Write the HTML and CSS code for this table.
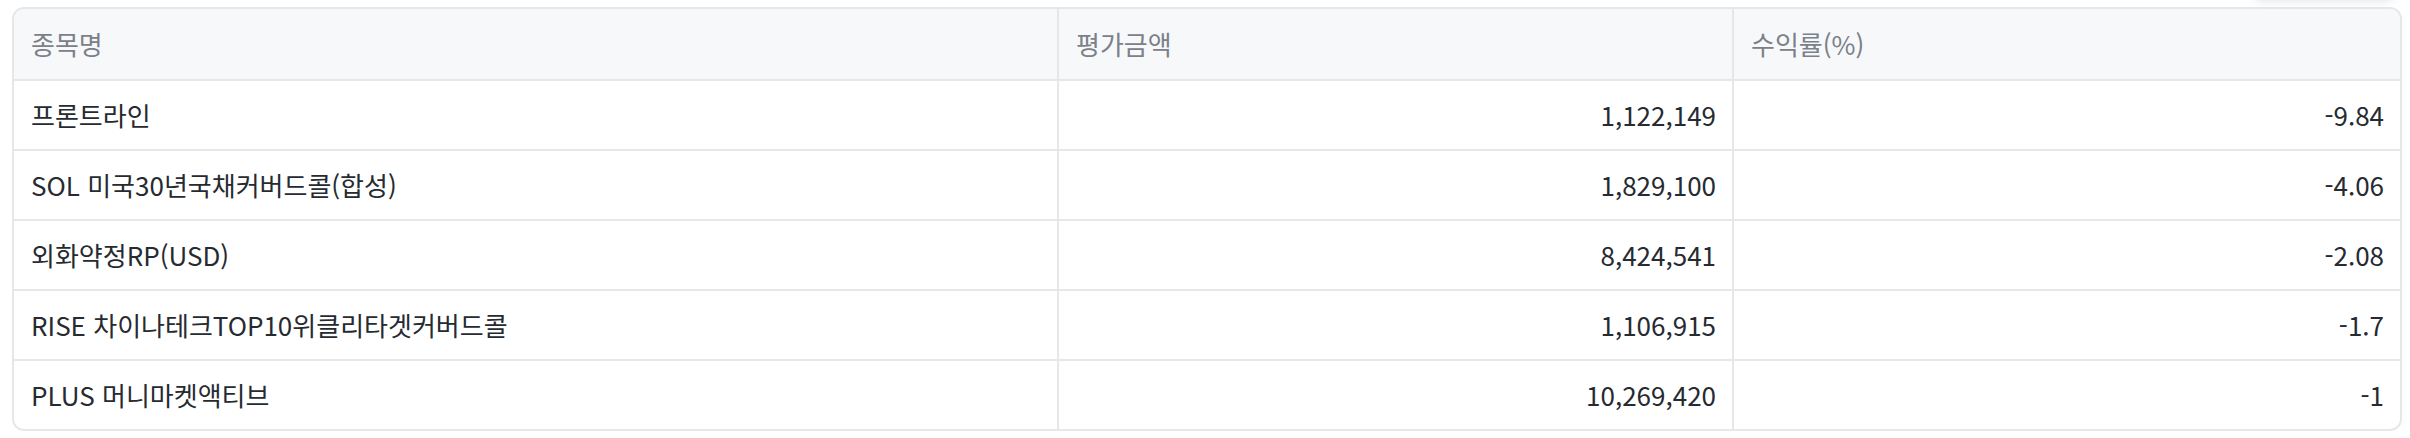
FILE: index.html
```html
<!DOCTYPE html>
<html lang="ko">
<head>
<meta charset="utf-8">
<link rel="stylesheet" href="styles.css">
</head>
<body>
<div class="page">
  <div class="top-shadow"></div>
  <div class="table-wrap">
    <table class="holdings">
      <thead>
        <tr>
          <th class="col-name">종목명</th>
          <th class="col-value">평가금액</th>
          <th class="col-rate">수익률(%)</th>
        </tr>
      </thead>
      <tbody>
        <tr><td>프론트라인</td><td class="num">1,122,149</td><td class="num">-9.84</td></tr>
        <tr><td>SOL 미국30년국채커버드콜(합성)</td><td class="num">1,829,100</td><td class="num">-4.06</td></tr>
        <tr><td>외화약정RP(USD)</td><td class="num">8,424,541</td><td class="num">-2.08</td></tr>
        <tr><td>RISE 차이나테크TOP10위클리타겟커버드콜</td><td class="num">1,106,915</td><td class="num">-1.7</td></tr>
        <tr><td>PLUS 머니마켓액티브</td><td class="num">10,269,420</td><td class="num">-1</td></tr>
      </tbody>
    </table>
  </div>
</div>
</body>
</html>
```

FILE: styles.css
```css
html, body {
  margin: 0;
  padding: 0;
  background: #ffffff;
}

body {
  font-family: "Noto Sans CJK KR", "Noto Sans", sans-serif;
  color: #2b2f36;
}

.page {
  position: relative;
  padding: 7px 8px 0 12px;
}

.top-shadow {
  position: absolute;
  top: -40px;
  right: 16px;
  width: 140px;
  height: 40px;
  border-radius: 8px;
  background: #ffffff;
  box-shadow: 0 2px 8px rgba(0, 0, 0, 0.09);
}

.table-wrap {
  border: 2px solid #e6e7e9;
  border-radius: 12px;
  overflow: hidden;
  background: #ffffff;
}

.holdings {
  width: 100%;
  border-collapse: collapse;
  table-layout: fixed;
  font-size: 26px;
}

.holdings th,
.holdings td {
  box-sizing: border-box;
  line-height: 36px;
  padding: 16px 16px 16px 17px;
  text-align: left;
  white-space: nowrap;
}

.holdings th {
  padding-top: 17px;
  padding-bottom: 17px;
  background: #f7f8fa;
  color: #7b8089;
  font-weight: 400;
  border-bottom: 2px solid #e6e7e9;
}

.holdings th + th,
.holdings td + td {
  border-left: 2px solid #e6e7e9;
}

.holdings tbody tr + tr td {
  border-top: 2px solid #e6e7e9;
}

.holdings td {
  color: #262a31;
}

.holdings td.num {
  text-align: right;
}

.col-name { width: 1044px; }
.col-value { width: 675px; }
.col-rate { width: auto; }
```
